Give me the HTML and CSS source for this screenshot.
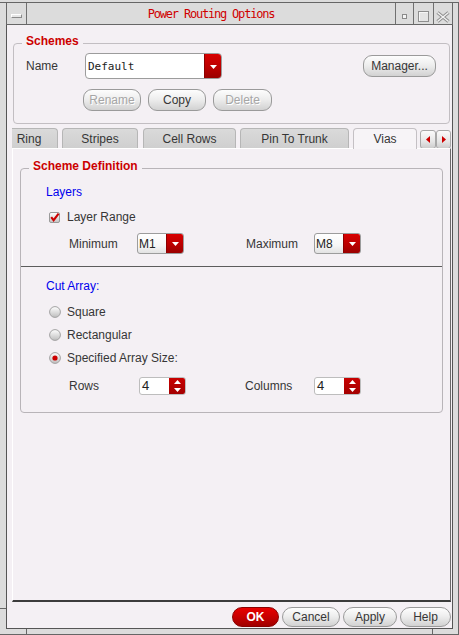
FILE: index.html
```html
<!DOCTYPE html>
<html>
<head>
<meta charset="utf-8">
<title>Power Routing Options</title>
<link rel="stylesheet" href="styles.css">
</head>
<body>
<div class="wm">
  <span class="tick tick-bl"></span>
  <span class="tick tick-br"></span>
  <span class="tick tick-lb"></span>
  <div class="titlebar">
    <div class="tb-menu"><span class="tb-bar"></span></div>
    <div class="tb-title">Power Routing Options</div>
    <div class="tb-btn tb-min"><span class="tb-min-box"></span></div>
    <div class="tb-btn tb-max"><span class="tb-max-box"></span></div>
    <div class="tb-btn tb-close">
      <svg width="14" height="12" viewBox="0 0 14 12"><path d="M1.5 1.5 L12.5 10.5 M12.5 1.5 L1.5 10.5" stroke="#8e8e8e" stroke-width="3.4" fill="none"/><path d="M1.5 1.5 L12.5 10.5 M12.5 1.5 L1.5 10.5" stroke="#f2f2f2" stroke-width="1.4" fill="none"/></svg>
    </div>
  </div>

  <div class="client">
    <div class="group schemes">
      <div class="group-title">Schemes</div>
      <div class="name-row">
        <span class="name-label">Name</span>
        <div class="combo combo-wide">
          <span class="combo-text mono">Default</span>
          <span class="combo-arrow"><svg width="7" height="4" viewBox="0 0 7 4"><path d="M0 0H7L3.5 4z" fill="#fff"/></svg></span>
        </div>
        <button class="btn manager">Manager...</button>
      </div>
      <div class="btn-row">
        <button class="btn w-58 disabled">Rename</button>
        <button class="btn w-58">Copy</button>
        <button class="btn w-59 disabled">Delete</button>
      </div>
    </div>

    <div class="tabbar">
      <div class="tabs">
        <div class="tab tab-ring">Ring</div>
        <div class="tab tab-stripes">Stripes</div>
        <div class="tab tab-cell">Cell Rows</div>
        <div class="tab tab-pin">Pin To Trunk</div>
        <div class="tab tab-vias active">Vias</div>
      </div>
      <div class="tab-arrows">
        <span class="tab-arrow"><svg width="4" height="7" viewBox="0 0 4 7"><path d="M4 0V7L0 3.5z" fill="#cc0000"/></svg></span>
        <span class="tab-arrow"><svg width="4" height="7" viewBox="0 0 4 7"><path d="M0 0V7L4 3.5z" fill="#cc0000"/></svg></span>
      </div>
    </div>

    <div class="panel">
      <div class="group schemedef">
        <div class="group-title">Scheme Definition</div>

        <div class="subhead sub-layers">Layers</div>
        <div class="check-row">
          <svg class="checkbox" width="11" height="11" viewBox="0 0 11 11">
            <defs><linearGradient id="cbg" x1="0" y1="0" x2="0" y2="1"><stop offset="0" stop-color="#ffffff"/><stop offset="1" stop-color="#c4c4c4"/></linearGradient></defs>
            <rect x="0.5" y="0.5" width="10" height="10" rx="1.5" fill="url(#cbg)" stroke="#9a9a9a"/>
            <path d="M2.2 5.2 L4.6 8.2 L9.6 1.6" fill="none" stroke="#cc0000" stroke-width="2.1"/>
          </svg>
          <span class="label">Layer Range</span>
        </div>
        <div class="pair-row layer-grid">
          <span class="label">Minimum</span>
          <div class="combo combo-small">
            <span class="combo-text">M1</span>
            <span class="combo-arrow"><svg width="7" height="4" viewBox="0 0 7 4"><path d="M0 0H7L3.5 4z" fill="#fff"/></svg></span>
          </div>
          <span></span>
          <span class="label">Maximum</span>
          <div class="combo combo-small">
            <span class="combo-text">M8</span>
            <span class="combo-arrow"><svg width="7" height="4" viewBox="0 0 7 4"><path d="M0 0H7L3.5 4z" fill="#fff"/></svg></span>
          </div>
        </div>

        <div class="separator"></div>

        <div class="subhead sub-cut">Cut Array:</div>
        <div class="radio-row first">
          <svg class="radio" width="12" height="12" viewBox="0 0 12 12">
            <defs><linearGradient id="rg" x1="0" y1="0" x2="0" y2="1"><stop offset="0" stop-color="#ffffff"/><stop offset="1" stop-color="#bdbdbd"/></linearGradient></defs>
            <circle cx="6" cy="6" r="5.4" fill="url(#rg)" stroke="#a2a2a2" stroke-width="1"/>
          </svg>
          <span class="label">Square</span>
        </div>
        <div class="radio-row">
          <svg class="radio" width="12" height="12" viewBox="0 0 12 12">
            <circle cx="6" cy="6" r="5.4" fill="url(#rg)" stroke="#a2a2a2" stroke-width="1"/>
          </svg>
          <span class="label">Rectangular</span>
        </div>
        <div class="radio-row">
          <svg class="radio" width="12" height="12" viewBox="0 0 12 12">
            <circle cx="6" cy="6" r="5.4" fill="url(#rg)" stroke="#a2a2a2" stroke-width="1"/>
            <circle cx="6" cy="6" r="2.6" fill="#cc0000"/>
          </svg>
          <span class="label">Specified Array Size:</span>
        </div>
        <div class="pair-row spin-grid">
          <span class="label">Rows</span>
          <div class="spin">
            <span class="spin-text">4</span>
            <span class="spin-arrows">
              <svg width="7" height="4" viewBox="0 0 7 4"><path d="M0 4H7L3.5 0z" fill="#fff"/></svg>
              <svg width="7" height="4" viewBox="0 0 7 4"><path d="M0 0H7L3.5 4z" fill="#fff"/></svg>
            </span>
          </div>
          <span></span>
          <span class="label">Columns</span>
          <div class="spin">
            <span class="spin-text">4</span>
            <span class="spin-arrows">
              <svg width="7" height="4" viewBox="0 0 7 4"><path d="M0 4H7L3.5 0z" fill="#fff"/></svg>
              <svg width="7" height="4" viewBox="0 0 7 4"><path d="M0 0H7L3.5 4z" fill="#fff"/></svg>
            </span>
          </div>
        </div>
      </div>
    </div>

    <div class="actions">
      <button class="btn btn-ok">OK</button>
      <button class="btn btn-cancel">Cancel</button>
      <button class="btn btn-apply">Apply</button>
      <button class="btn btn-help">Help</button>
    </div>
  </div>
</div>
</body>
</html>
```

FILE: styles.css
```css
html, body {
  margin: 0;
}
body {
  width: 459px;
  height: 635px;
  box-sizing: border-box;
  padding-top: 2px;
  background: #dcdcdc;
  overflow: hidden;
  font-family: "Liberation Sans", Arial, sans-serif;
  font-size: 12px;
  color: #363636;
}

/* window manager frame */
.wm {
  position: relative;
  height: 633px;
  box-sizing: border-box;
  border-top: 1px solid #666666;
  border-right: 1px solid #666666;
  border-bottom: 1px solid #666666;
  display: flex;
  flex-direction: column;
}
.tick {
  position: absolute;
  background: #666666;
}
.tick-bl { left: 26px; bottom: 0; width: 1px; height: 5px; }
.tick-br { left: 432px; bottom: 0; width: 1px; height: 5px; }
.tick-lb { left: 0; top: 605px; width: 6px; height: 1px; }

.titlebar {
  display: flex;
  align-items: flex-start;
  height: 21px;
  margin: 0 5px 0 6px;
  border-left: 1px solid #666666;
  border-right: 1px solid #666666;
  border-bottom: 1px solid #666666;
  background: #dcdcdc;
}
.tb-menu {
  width: 19px;
  height: 21px;
  border-right: 1px solid #707070;
  display: flex;
  justify-content: center;
}
.tb-bar {
  margin-top: 11px;
  width: 11px;
  height: 4px;
  box-sizing: border-box;
  border: 1px solid #8a8a8a;
  border-top-color: #ffffff;
  border-left-color: #ffffff;
  background: #e6e6e6;
}
.tb-title {
  flex: 1;
  text-align: center;
  font-family: "DejaVu Sans Mono", "Liberation Mono", monospace;
  font-size: 12px;
  letter-spacing: -1.2px;
  line-height: 17px;
  padding-top: 3px;
  color: #d00000;
}
.tb-btn {
  height: 21px;
  border-left: 1px solid #707070;
  display: flex;
  justify-content: center;
}
.tb-min { width: 17px; }
.tb-max { width: 19px; }
.tb-close { width: 18px; align-items: flex-start; }
.tb-close svg { margin-top: 8px; }
.tb-min-box {
  margin-top: 11px;
  width: 5px;
  height: 5px;
  box-sizing: border-box;
  border: 1px solid #8a8a8a;
  background: #f4f4f4;
}
.tb-max-box {
  margin-top: 8px;
  width: 11px;
  height: 11px;
  box-sizing: border-box;
  border: 1px solid #8e8e8e;
  box-shadow: inset 1px 1px 0 #f6f6f6;
  background: #e4e4e4;
}

/* client area */
.client {
  flex: 1;
  margin: 0 5px 5px 6px;
  border-left: 1px solid #555555;
  border-right: 1px solid #555555;
  border-bottom: 1px solid #555555;
  background: #f4f0f4;
  display: flex;
  flex-direction: column;
}

.group {
  border: 1px solid #c2bec2;
  border-radius: 4px;
}
.group-title {
  width: fit-content;
  margin: -10px 0 0 8px;
  padding: 0 4px;
  background: #f4f0f4;
  color: #cc0000;
  font-weight: bold;
  line-height: 14px;
}

/* schemes */
.schemes {
  margin: 18px 2px 0 6px;
  padding-bottom: 12px;
}
.name-row {
  display: flex;
  align-items: center;
  margin-top: 5px;
  padding: 0 13px 0 12px;
}
.name-label {
  width: 59px;
  line-height: 14px;
}
.mono {
  font-family: "DejaVu Sans Mono", "Liberation Mono", monospace;
  font-size: 11px;
}
.combo {
  display: flex;
  box-sizing: border-box;
  border: 1px solid #9c9c9c;
  border-radius: 4px;
  overflow: hidden;
  background: linear-gradient(#ffffff, #f6f6f6 60%, #e2e2e2);
}
.combo-wide {
  width: 137px;
  height: 26px;
  background: #ffffff;
}
.combo-small {
  width: 47px;
  height: 21px;
  border-radius: 3px;
}
.combo-text {
  flex: 1;
  display: flex;
  align-items: center;
  padding-left: 2px;
  color: #222222;
}
.combo-small .combo-text {
  padding-left: 1px;
  font-size: 12px;
}
.combo-arrow {
  width: 16px;
  display: flex;
  align-items: center;
  justify-content: center;
  background: linear-gradient(#d80000, #b80000 60%, #9a0000);
  border-left: 1px solid #8c0000;
}
.combo-arrow svg { margin-top: 1px; }

.btn {
  box-sizing: border-box;
  height: 22px;
  padding: 0;
  margin: 0;
  border: 1px solid #9a9a9a;
  border-radius: 9px;
  background: linear-gradient(#fdfdfd, #eeeeee 45%, #d2d2d2);
  font: inherit;
  font-size: 12px;
  color: #363636;
  display: flex;
  align-items: center;
  justify-content: center;
}
.btn.disabled {
  color: #a6a6a6;
  text-shadow: 1px 1px 0 #ffffff;
}
.manager {
  width: 73px;
  margin-left: auto;
}
.btn-row {
  display: flex;
  gap: 7px;
  margin-top: 10px;
  padding-left: 69px;
}
.w-58 { width: 58px; }
.w-59 { width: 59px; }

/* tabs */
.tabbar {
  display: flex;
  height: 21px;
  margin: 4px 1px -1px 5px;
}
.tabs {
  flex: 1;
  display: flex;
  align-items: flex-start;
  gap: 4px;
  overflow: hidden;
}
.tab {
  flex: none;
  box-sizing: border-box;
  height: 20px;
  padding-top: 1px;
  border: 1px solid #b6b6b6;
  border-bottom: none;
  border-radius: 4px 4px 0 0;
  background: linear-gradient(#dadada, #cfcfcf);
  text-align: center;
  line-height: 18px;
  color: #363636;
}
.tab-ring { width: 58px; margin-left: -12px; }
.tab-stripes { width: 76px; }
.tab-cell { width: 93px; margin-left: 1px; }
.tab-pin { width: 109px; }
.tab-vias { width: 64px; }
.tab.active {
  position: relative;
  z-index: 1;
  height: 21px;
  background: #f7f4f7;
  border-color: #c4c0c4;
}
.tab-arrows {
  display: flex;
  margin-top: 2px;
}
.tab-arrow {
  box-sizing: border-box;
  width: 16px;
  height: 19px;
  border: 1px solid #a8a8a8;
  border-radius: 3px;
  background: linear-gradient(#fbfbfb, #e6e6e6 60%, #cdcdcd);
  display: flex;
  align-items: center;
  justify-content: center;
}
.tab-arrow + .tab-arrow { width: 15px; }

/* panel */
.panel {
  flex: 1;
  margin: 0 1px 0 5px;
  border-top: 1px solid #ffffff;
  border-left: 1px solid #ffffff;
  border-right: 1px solid #6a6a6a;
  border-bottom: 2px solid #3c3c3c;
}
.schemedef {
  margin: 19px 7px 0 7px;
  padding-bottom: 17px;
  border-color: #b8b4b8;
}
.subhead {
  color: #0000ee;
  line-height: 14px;
  margin-left: 25px;
  margin-top: 12px;
}
.label {
  line-height: 14px;
  white-space: nowrap;
}
.check-row {
  display: flex;
  align-items: center;
  height: 14px;
  margin-top: 11px;
  padding-left: 28px;
}
.checkbox { margin-right: 7px; }
.pair-row {
  display: grid;
  align-items: center;
  padding-left: 48px;
}
.layer-grid {
  grid-template-columns: 68px 47px 62px 68px 47px;
  height: 21px;
  margin-top: 9px;
}
.separator {
  margin-top: 12px;
  border-top: 1px solid #5c5c5c;
}
.radio-row {
  display: flex;
  align-items: center;
  height: 14px;
  margin-top: 9px;
  padding-left: 28px;
}
.radio-row.first { margin-top: 12px; }
.radio { margin-right: 6px; }
.spin-grid {
  grid-template-columns: 70px 47px 59px 69px 47px;
  height: 18px;
  margin-top: 12px;
}
.spin {
  display: flex;
  box-sizing: border-box;
  width: 47px;
  height: 18px;
  border: 1px solid #bdbdbd;
  border-radius: 3px;
  overflow: hidden;
  background: #ffffff;
}
.spin-text {
  flex: 1;
  padding-left: 2px;
  font-size: 13px;
  line-height: 16px;
  color: #222222;
}
.spin-arrows {
  width: 16px;
  display: flex;
  flex-direction: column;
  align-items: center;
  justify-content: center;
  gap: 4px;
  background: linear-gradient(#c80000, #a40000);
}

/* bottom actions */
.actions {
  display: flex;
  justify-content: flex-end;
  gap: 3px;
  height: 20px;
  margin: 5px 1px 1px 0;
}
.actions .btn {
  height: 20px;
  border-radius: 10px;
}
.btn-ok {
  width: 47px;
  background: linear-gradient(#e80000, #c40000 55%, #a00000);
  border-color: #8a0000;
  color: #ffffff;
  font-weight: bold;
}
.btn-cancel { width: 58px; }
.btn-apply { width: 54px; }
.btn-help { width: 51px; }
```
